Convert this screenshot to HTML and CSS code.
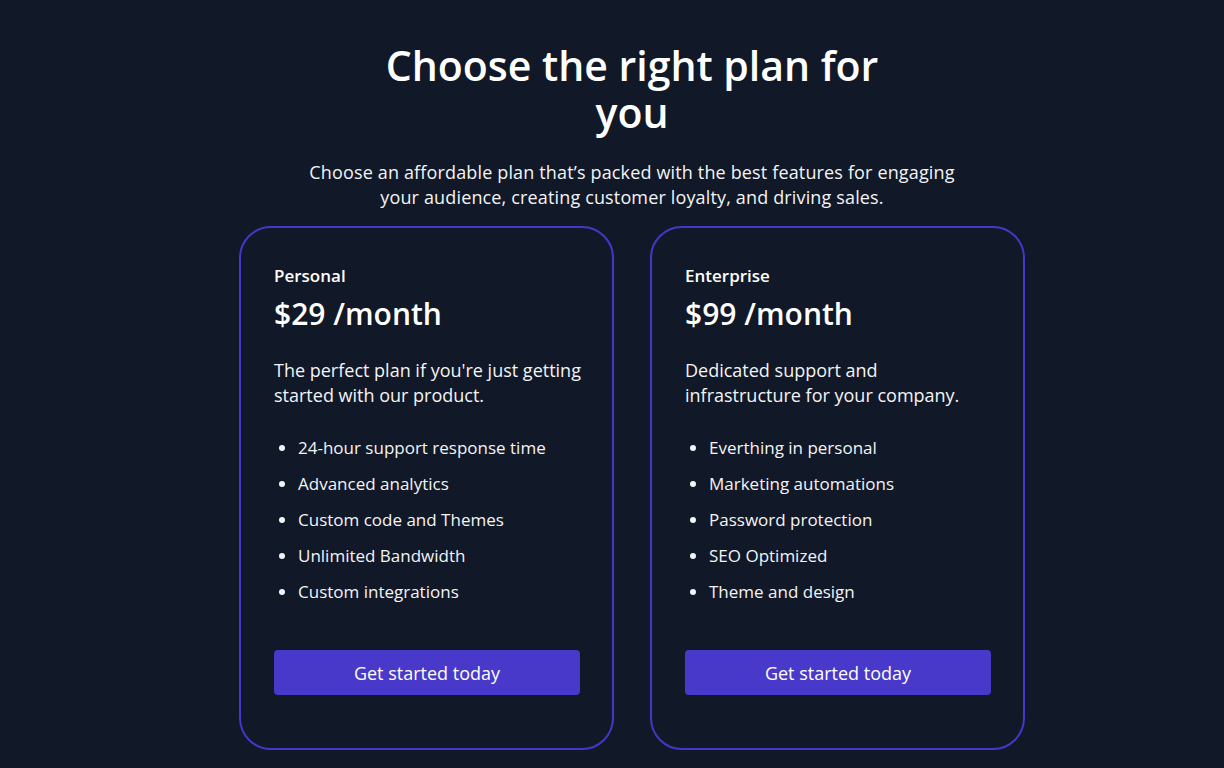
FILE: index.html
```html
<!DOCTYPE html>
<html lang="en">
<head>
<meta charset="utf-8">
<title>Pricing</title>
<link rel="stylesheet" href="styles.css">
</head>
<body>
<main class="pricing">
  <h1 class="title">Choose the right plan for you</h1>
  <p class="subtitle">Choose an affordable plan that’s packed with the best features for engaging your audience, creating customer loyalty, and driving sales.</p>
  <div class="cards">
    <section class="card">
      <h2 class="plan">Personal</h2>
      <p class="price">$29 /month</p>
      <p class="desc">The perfect plan if you're just getting started with our product.</p>
      <ul class="features">
        <li>24-hour support response time</li>
        <li>Advanced analytics</li>
        <li>Custom code and Themes</li>
        <li>Unlimited Bandwidth</li>
        <li>Custom integrations</li>
      </ul>
      <a class="btn" href="#">Get started today</a>
    </section>
    <section class="card">
      <h2 class="plan">Enterprise</h2>
      <p class="price">$99 /month</p>
      <p class="desc">Dedicated support and infrastructure for your company.</p>
      <ul class="features">
        <li>Everthing in personal</li>
        <li>Marketing automations</li>
        <li>Password protection</li>
        <li>SEO Optimized</li>
        <li>Theme and design</li>
      </ul>
      <a class="btn" href="#">Get started today</a>
    </section>
  </div>
</main>
</body>
</html>
```

FILE: styles.css
```css
* { box-sizing: border-box; }
html, body { margin: 0; padding: 0; }
body {
  background: #111827;
  color: #ffffff;
  font-family: "Open Sans", "DejaVu Sans", sans-serif;
  overflow: hidden;
}
.pricing {
  width: 1264px;
  display: flex;
  flex-direction: column;
  align-items: center;
  padding-top: 42px;
}
.title {
  margin: 0;
  width: 520px;
  text-align: center;
  font-size: 41px;
  line-height: 47px;
  font-weight: 600;
  letter-spacing: 0;
}
.subtitle {
  margin: 24px 0 0;
  width: 660px;
  text-align: center;
  font-size: 18px;
  line-height: 25px;
  letter-spacing: 0.15px;
  color: #f3f4f6;
}
.cards {
  margin-top: 16px;
  display: flex;
  gap: 36px;
}
.card {
  width: 375px;
  border: 2px solid #4338ca;
  border-radius: 32px;
  padding: 35px 32px 53px 33px;
  display: flex;
  flex-direction: column;
}
.plan {
  margin: 0;
  font-size: 17px;
  line-height: 26px;
  font-weight: 600;
}
.price {
  margin: 5px 0 0;
  font-size: 30px;
  line-height: 40px;
  font-weight: 600;
}
.desc {
  margin: 24px -4px 0 0;
  font-size: 18px;
  line-height: 25px;
  color: #f3f4f6;
}
.features {
  margin: 27px 0 0;
  padding: 0 0 0 24px;
  list-style: disc;
  font-size: 17px;
  line-height: 26px;
  color: #f3f4f6;
}
.features li + li { margin-top: 10px; }
.btn {
  margin-top: 45px;
  height: 45px;
  border-radius: 4px;
  background: #4839cb;
  color: #ffffff;
  text-decoration: none;
  display: flex;
  align-items: center;
  justify-content: center;
  font-size: 18px;
  font-weight: 500;
}
```
